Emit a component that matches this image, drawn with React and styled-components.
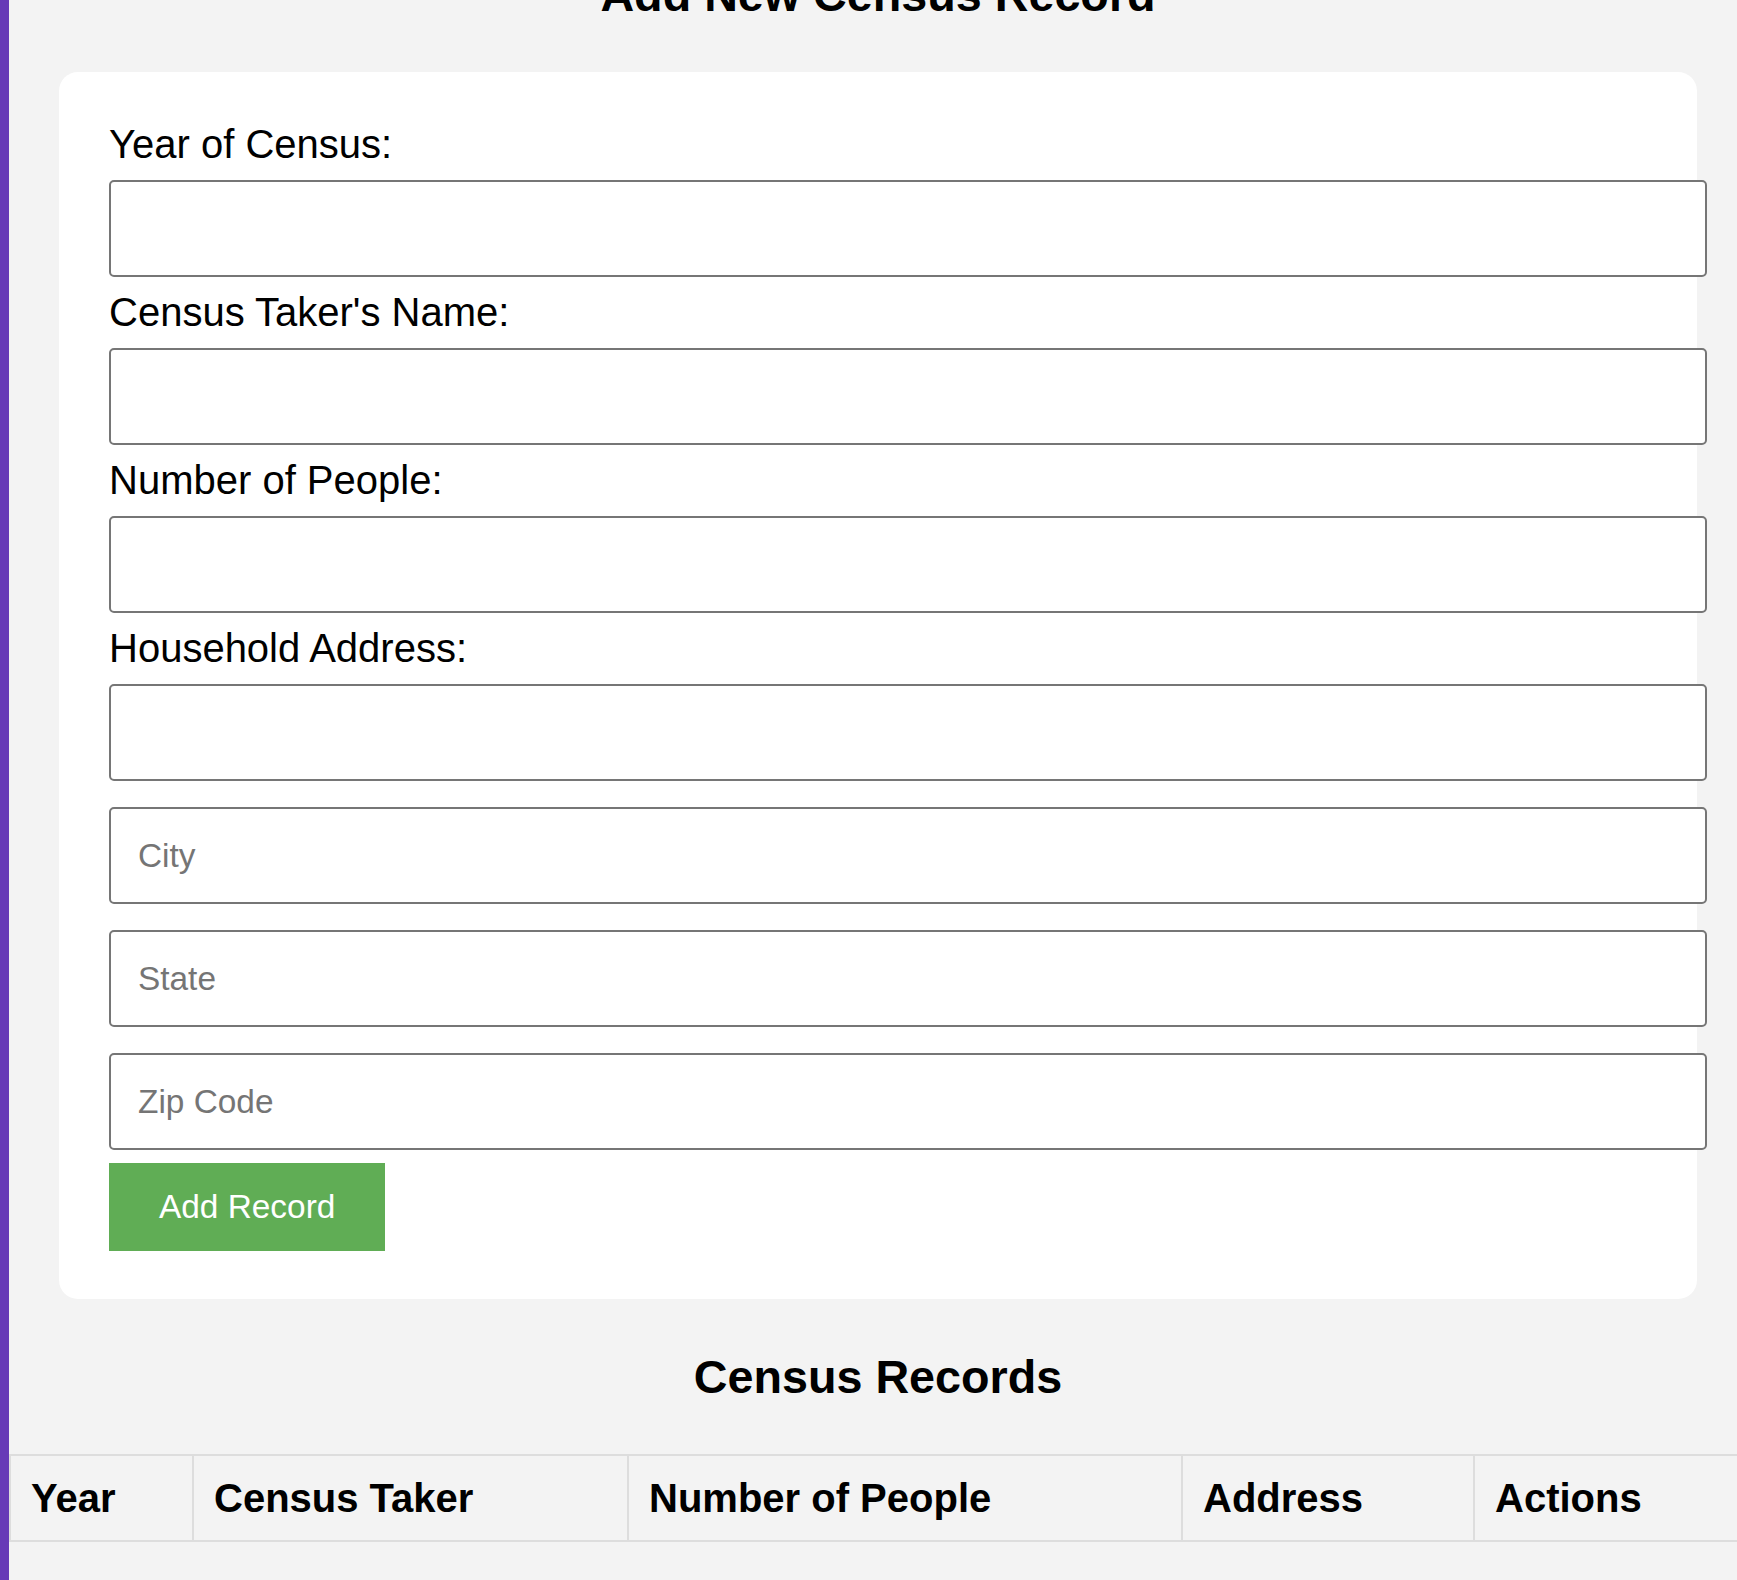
import React from 'react'
import styled, { createGlobalStyle } from 'styled-components'

const GlobalStyle = createGlobalStyle`
  html, body {
    margin: 0;
    padding: 0;
    background: #f3f3f3;
  }
  body {
    font-family: "Liberation Sans", Arial, sans-serif;
    color: #000;
  }
`

const Page = styled.div`
  display: flex;
  width: 100%;
  min-height: 100vh;
  overflow: hidden;
`

const SideBar = styled.div`
  flex: 0 0 9px;
  background: #673ab7;
`

const Main = styled.main`
  flex: 0 0 1738px;
  width: 1738px;
`

const Heading = styled.h2`
  margin: ${(p) => p.$top}px 0 50px;
  font-size: 46.7px;
  line-height: 54px;
  font-weight: bold;
  text-align: center;
`

const Card = styled.form`
  display: flex;
  flex-direction: column;
  align-items: flex-start;
  margin: 0 50px;
  padding: 50px 50px 48px;
  background: #fff;
  border-radius: 19px;
`

const Label = styled.label`
  font-size: 40px;
  line-height: 45px;
`

const Input = styled.input`
  box-sizing: content-box;
  width: 100%;
  margin: 13px 0;
  padding: 28px 29px 28px 27px;
  border: 2px solid #767676;
  border-radius: 5px;
  background: #fff;
  font-family: "Liberation Sans", Arial, sans-serif;
  font-size: 33.4px;
  line-height: 37px;
  color: #000;
  outline: none;

  &::placeholder {
    color: #757575;
  }
`

const Button = styled.button`
  margin: 0;
  padding: 25px 50px 26px;
  border: none;
  background: #60ad55;
  color: #fff;
  font-family: "Liberation Sans", Arial, sans-serif;
  font-size: 33.4px;
  line-height: 37px;
  cursor: pointer;
`

const Table = styled.table`
  width: 100%;
  table-layout: fixed;
  border-collapse: collapse;
`

const Th = styled.th`
  width: ${(p) => p.$w}px;
  padding: 19px 20px;
  border: 2px solid #ddd;
  text-align: left;
  font-size: 40px;
  line-height: 46px;
  font-weight: bold;
  white-space: nowrap;
`

const fields = [
  { label: 'Year of Census:', name: 'year' },
  { label: "Census Taker's Name:", name: 'taker' },
  { label: 'Number of People:', name: 'people' },
  { label: 'Household Address:', name: 'address' },
]

// widths are content widths; each cell adds 40px padding + 2px border
const columns = [
  { title: 'Year', w: 141 },
  { title: 'Census Taker', w: 393 },
  { title: 'Number of People', w: 512 },
  { title: 'Address', w: 250 },
  { title: 'Actions', w: 232 },
]

export default function App() {
  return (
    <>
      <GlobalStyle />
      <Page>
        <SideBar />
        <Main>
          <Heading $top={-32}>Add New Census Record</Heading>
          <Card onSubmit={(e) => e.preventDefault()}>
            {fields.map((f) => (
              <React.Fragment key={f.name}>
                <Label htmlFor={f.name}>{f.label}</Label>
                <Input id={f.name} type="text" />
              </React.Fragment>
            ))}
            <Input type="text" placeholder="City" />
            <Input type="text" placeholder="State" />
            <Input type="text" placeholder="Zip Code" />
            <Button type="submit">Add Record</Button>
          </Card>
          <Heading $top={51}>Census Records</Heading>
          <Table>
            <thead>
              <tr>
                {columns.map((c) => (
                  <Th key={c.title} $w={c.w}>{c.title}</Th>
                ))}
              </tr>
            </thead>
            <tbody />
          </Table>
        </Main>
      </Page>
    </>
  )
}
